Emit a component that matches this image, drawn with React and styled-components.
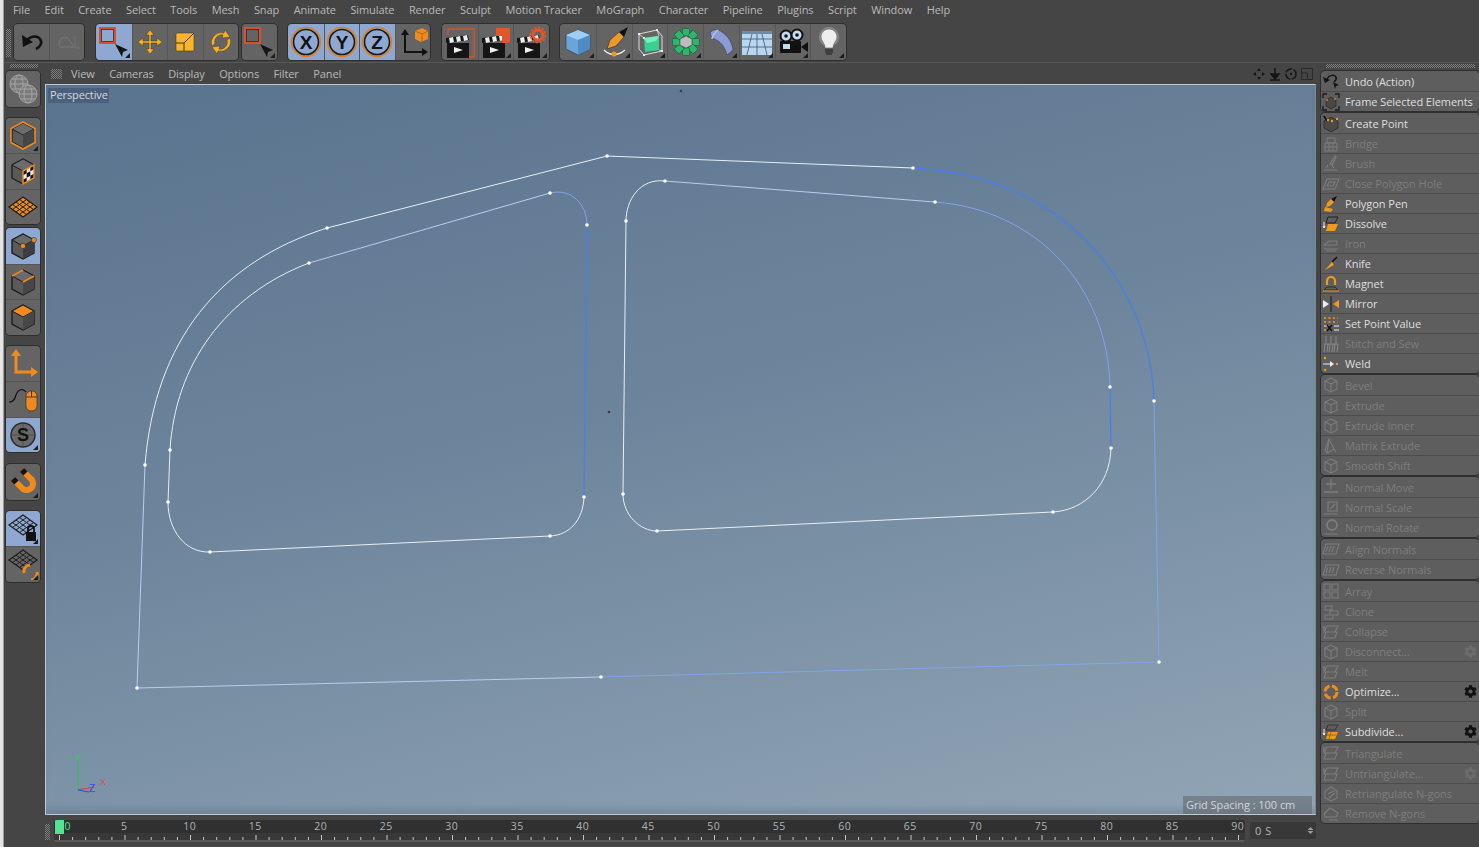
import React from "react";
import styled, { createGlobalStyle } from "styled-components";
import { FaCog } from "react-icons/fa";

const Global = createGlobalStyle`
  html, body { margin: 0; padding: 0; background: #454545; }
  body { font-family: "Open Sans", "Liberation Sans", sans-serif; font-size: 11px; overflow: hidden; }
  * { box-sizing: border-box; }
`;

const Page = styled.div`
  display: flex;
  width: 1479px;
  height: 847px;
  overflow: hidden;
  background: #454545;
`;
const WindowEdge = styled.div`
  width: 4px;
  background: linear-gradient(90deg, #e4e4e4 0 3px, #9a9a9a 3px);
`;
const Shell = styled.div`
  flex: 1;
  display: flex;
  flex-direction: column;
  min-width: 0;
`;
const MenuBar = styled.nav`
  display: flex;
  height: 20px;
  align-items: center;
  padding: 0 0 2px 9px;
  gap: 14.56px;
  color: #b9b9b9;
  letter-spacing: -0.1px;
`;
const Toolbar = styled.div`
  display: flex;
  height: 43px;
  padding: 4px 0 3px 2px;
  border-bottom: 1px solid #575757;
  align-items: stretch;
`;
const Grip = styled.div`
  background: repeating-conic-gradient(#808080 0 25%, #3f3f3f 0 50%) 0 0 / 2px 2px;
  flex: none;
`;
const ToolGrip = styled(Grip)`
  width: 5px;
  height: 28px;
  margin: 5px 3px 0 0;
`;
const ToolGroup = styled.div`
  display: flex;
  height: 36px;
  margin-left: ${(p) => p.$gap}px;
  border-radius: 4px;
  overflow: hidden;
  box-shadow: 0 0 0 1px #2e2e2e;
`;
const ToolButton = styled.div`
  position: relative;
  width: ${(p) => p.$w ?? 35.5}px;
  height: 36px;
  display: flex;
  align-items: center;
  justify-content: center;
  background: ${(p) => (p.$active ? "#8ea8d2" : "#646464")};
  & + & { border-left: 1px solid #565656; }
  &::after {
    content: "";
    display: ${(p) => (p.$corner ? "block" : "none")};
    position: absolute;
    right: 2px;
    bottom: 2px;
    border-left: 5px solid transparent;
    border-bottom: 5px solid #1c1c1c;
  }
`;
const Body = styled.div`
  flex: 1;
  display: flex;
  min-height: 0;
`;
const Palette = styled.aside`
  width: 41px;
  padding: 1px 0 0 2px;
  display: flex;
  flex-direction: column;
  flex: none;
`;
const PaletteGrip = styled(Grip)`
  width: 28px;
  height: 4px;
  margin: 0 0 3px 4px;
`;
const PaletteGroup = styled.div`
  width: 34px;
  flex: none;
  margin-top: ${(p) => p.$top ?? 0}px;
  border-radius: 4px;
  overflow: hidden;
  box-shadow: 0 0 0 1px #2e2e2e;
`;
const PaletteButton = styled(ToolButton)`
  width: 34px;
  height: 35.5px;
  & + & { border-left: 0; border-top: 1px solid #565656; }
`;
const Center = styled.main`
  width: 1271px;
  flex: none;
  display: flex;
  flex-direction: column;
`;
const ViewHeader = styled.div`
  height: 21px;
  display: flex;
  align-items: center;
  padding-left: 6px;
  color: #b9b9b9;
  letter-spacing: -0.1px;
`;
const ViewGrip = styled(Grip)`
  width: 11px;
  height: 10px;
  margin-right: 9px;
`;
const ViewMenu = styled.div`
  display: flex;
  gap: 14.5px;
  flex: 1;
`;
const ViewIcons = styled.div`
  display: flex;
  gap: 2px;
  padding-right: 2px;
`;
const Viewport = styled.section`
  position: relative;
  height: 731px;
  flex: none;
  border: 1px solid #c4c7c9;
  border-right-color: #7a8894;
  background: linear-gradient(166deg, #5a738e 0%, #6d859c 45%, #92a5b5 100%);
  box-shadow: inset 0 -9px 6px -4px rgba(70, 90, 110, 0.28);
  overflow: hidden;
`;
const PerspectiveTag = styled.div`
  position: absolute;
  left: 2px;
  top: 3px;
  width: 61px;
  height: 15px;
  padding-left: 2px;
  line-height: 13px;
  letter-spacing: -0.12px;
  color: #d4d8dc;
  background: rgba(70, 90, 115, 0.75);
`;
const GridTag = styled.div`
  position: absolute;
  right: 3px;
  bottom: 0;
  width: 129px;
  height: 18px;
  padding-left: 3px;
  line-height: 18px;
  letter-spacing: -0.05px;
  color: #d0d5d9;
  background: rgba(95, 100, 105, 0.55);
`;
const SplineLayer = styled.svg`
  position: absolute;
  inset: 0;
  width: 1271px;
  height: 730px;
`;
const Timeline = styled.footer`
  flex: 1;
  display: flex;
  align-items: flex-start;
  padding-top: 5px;
`;
const TimeGrip = styled(Grip)`
  width: 5px;
  height: 16px;
  margin: 4px 4px 0 0;
`;
const Ruler = styled.div`
  position: relative;
  width: 1191px;
  height: 22px;
  border-radius: 3px;
  background: linear-gradient(#303030 0 13px, #383838 13px 20px, #5a5a5a 20px);
  overflow: hidden;
  flex: none;
`;
const RulerMarks = styled.div`
  display: flex;
  height: 14px;
  padding-left: 37.5px;
`;
const RulerMark = styled.span`
  width: 65.5px;
  flex: none;
  text-align: center;
  line-height: 13px;
  font-size: 10.5px;
  letter-spacing: 0.4px;
  color: #aeb4b8;
`;
const Playhead = styled.div`
  position: absolute;
  left: 1px;
  top: 0;
  width: 9px;
  height: 14px;
  background: #55e291;
`;
const PlayheadFrame = styled.span`
  position: absolute;
  left: 10.5px;
  top: 0;
  line-height: 13px;
  font-size: 10.5px;
  color: #55e291;
`;
const Ticks = styled.svg`
  position: absolute;
  left: 0;
  top: 14px;
  width: 1191px;
  height: 8px;
`;
const FrameField = styled.div`
  width: 66px;
  height: 17px;
  margin: 2px 0 0 5px;
  border-radius: 2px;
  background: #383838;
  color: #b5b5b5;
  display: flex;
  align-items: center;
  justify-content: space-between;
  padding: 0 2px 0 5px;
  letter-spacing: 0.6px;
`;
const SideColumn = styled.aside`
  margin-left: 5px;
  width: 159px;
  flex: none;
  display: flex;
  flex-direction: column;
`;
const SideGrip = styled(Grip)`
  height: 4px;
  margin: 1px 5px 3px 5px;
`;
const SideGroup = styled.ul`
  list-style: none;
  margin: 0 1px 2px 0;
  padding: 0;
  background: #5e5e5e;
  border-radius: 4px;
  box-shadow: 0 0 0 1px #2f2f2f;
  overflow: hidden;
`;
const SideRow = styled.li`
  display: flex;
  align-items: center;
  height: 20px;
  padding-left: 1px;
  color: ${(p) => (p.$off ? "#7d7d7d" : "#dedede")};
  letter-spacing: -0.05px;
  & + & { border-top: 1px solid #4c4c4c; }
`;
const RowIcon = styled.span`
  width: 23px;
  height: 18px;
  flex: none;
  display: flex;
  align-items: center;
`;
const RowLabel = styled.span`
  flex: 1;
  white-space: nowrap;
`;
const RowGear = styled.span`
  display: flex;
  padding-right: 2px;
  font-size: 13px;
  color: ${(p) => (p.$off ? "#6b6b6b" : "#111")};
`;
const Glyph = styled.svg`
  width: ${(p) => p.$w ?? 32}px;
  height: ${(p) => p.$h ?? p.$w ?? 32}px;
  flex: none;
`;

const Ico = ({ w = 32, box = 32, children }) => (
  <Glyph $w={w} viewBox={`0 0 ${box} ${box}`}>{children}</Glyph>
);

const Cursor = () => <path d="M17 18l13 6-5 2-1 5z" fill="#151515" />;

const clapper = (
  <>
    <rect x="3" y="17" width="22" height="15" fill="#151515" />
    <path d="M2 12l22-3 1 5-23 3z" fill="#151515" />
    <path d="M5 12l4-1 1 5-4 1zM12 11l4-1 1 5-4 1zM19 10l4-1 1 5-4 1z" fill="#eee" />
    <path d="M10 21l9 3-9 3z" fill="#eee" />
  </>
);

const grid = (stroke, fill) => (
  <>
    <path d="M16 6L30 16 16 26 2 16z" fill={fill} stroke={stroke} strokeWidth="1.2" />
    <path d="M12.5 8.5l14 10M9 11l14 10M5.500 13.500l14 10M19.500 8.500l-14 10M23 11L9 21M26.500 13.500l-14 10" stroke={stroke} strokeWidth="1" fill="none" />
  </>
);

const cube = (top, side, line = "#1c1c1c") => (
  <>
    <path d="M16 4l11 6v13l-11 6-11-6V10z" fill="#5a5a5a" stroke={line} strokeWidth="1.4" />
    <path d="M16 4l11 6-11 6-11-6z" fill={top} stroke={line} strokeWidth="1" />
    <path d="M16 16l11-6v13l-11 6z" fill={side} />
  </>
);

// cloner ring, eight small cubes around the middle one
const ringCubes = [0, 45, 90, 135, 180, 225, 270, 315];

const toolIcons = {
  undo: (
    <Ico>
      <path d="M10 16c3-6 11-7 14-3 3 4 0 8-4 10" fill="none" stroke="#111" strokeWidth="2.6" />
      <path d="M6 9l1 12 10-5z" fill="#111" />
    </Ico>
  ),
  redo: (
    <Ico>
      <path d="M9 21c-3-6 2-11 8-9l6 9H9z" fill="none" stroke="#707070" strokeWidth="1.4" />
      <path d="M24 10v12h5" fill="none" stroke="#707070" strokeWidth="1.2" />
    </Ico>
  ),
  live: (
    <Ico>
      <rect x="2" y="2" width="15" height="15" fill="none" stroke="#d6512c" strokeWidth="2" />
      <rect x="3.500" y="3.500" width="12" height="12" fill="none" stroke="#2c2c2c" strokeWidth="0.8" />
      <Cursor />
    </Ico>
  ),
  move: (
    <Ico>
      <path d="M16 4l4 5h-3v6h6v-3l5 4-5 4v-3h-6v6h3l-4 5-4-5h3v-6H9v3l-5-4 5-4v3h6V9h-3z" fill="#f5b027" stroke="#3a2a10" strokeWidth="0.4" />
    </Ico>
  ),
  scale: (
    <Ico>
      <rect x="7" y="7" width="18" height="18" rx="1.500" fill="#f7b42c" stroke="#3a2a10" strokeWidth="0.5" />
      <path d="M7 17h8l10-10M15 17v8" fill="none" stroke="#4a3510" strokeWidth="1" />
    </Ico>
  ),
  rotate: (
    <Ico>
      <path d="M7 20a10 10 0 0 1 12-13l1-3 5 7-8 1 1-3a7 7 0 0 0-8 9z" fill="#f5b027" stroke="#3a2a10" strokeWidth="0.4" />
      <path d="M25 12a10 10 0 0 1-12 13l-1 3-5-7 8-1-1 3a7 7 0 0 0 8-9z" fill="#f5b027" stroke="#3a2a10" strokeWidth="0.4" />
    </Ico>
  ),
  coords: (
    <Ico>
      <path d="M8 8v18h19" fill="none" stroke="#111" strokeWidth="2" />
      <path d="M8 3l4 6H4zM31 26l-6 4v-8z" fill="#111" />
      <path d="M18 5l7-3 6 3v8l-7 3-6-3z" fill="#ef8a1e" />
      <path d="M18 5l7 3 6-3M25 8v8" stroke="#a95c0c" fill="none" strokeWidth="0.8" />
    </Ico>
  ),
  renderView: (
    <Ico>
      {clapper}
      <path d="M4 9V3h26v28h-5" fill="none" stroke="#d6512c" strokeWidth="1.4" />
    </Ico>
  ),
  renderPic: (
    <Ico>
      {clapper}
      <path d="M16 2h14v13a2 2 0 0 1-2 2h-6v-7h-6z" fill="#e2562a" />
    </Ico>
  ),
  renderSet: (
    <Ico>
      {clapper}
      <circle cx="23" cy="9" r="5" fill="none" stroke="#e2562a" strokeWidth="3" />
      <circle cx="23" cy="9" r="7.500" fill="none" stroke="#e2562a" strokeWidth="1.800" strokeDasharray="2.400 1.500" />
    </Ico>
  ),
  cube: (
    <Ico>
      <path d="M16 4l12 5v14l-12 6-12-6V9z" fill="#6aa5d8" stroke="#223a50" strokeWidth="0.6" />
      <path d="M16 4l12 5-12 5-12-5z" fill="#9ed0f5" />
      <path d="M16 14l12-5v14l-12 6z" fill="#4e8cc4" />
    </Ico>
  ),
  pen: (
    <Ico>
      <path d="M30 1l-9 5 5 5z" fill="#111" />
      <path d="M21 6l5 5-8 9-9 3 3-9z" fill="#e89a2c" stroke="#3a2a10" strokeWidth="0.6" />
      <path d="M6 24c6 6 14 6 21 0" fill="none" stroke="#eee" strokeWidth="1.400" />
      <circle cx="16" cy="28" r="2.500" fill="#ef9a1e" />
    </Ico>
  ),
  gem: (
    <Ico>
      <path d="M5 8l18-4 5 6v15l-18 4-5-6z" fill="none" stroke="#e6e6e6" strokeWidth="0.9" />
      <path d="M10 12l15-2v14l-14 2z" fill="#38d090" />
      <path d="M10 12l15-2-3 5-9 2z" fill="#7af0bc" />
      <path d="M5 8l5 4M23 4l2 6M28 25l-3-1" stroke="#e6e6e6" strokeWidth="0.8" />
      <g fill="#fff">
        <circle cx="5" cy="8" r="1.100" />
        <circle cx="23" cy="4" r="1.100" />
        <circle cx="28" cy="25" r="1.100" />
        <circle cx="10" cy="29" r="1.100" />
        <circle cx="10" cy="12" r="1.100" />
      </g>
    </Ico>
  ),
  cloner: (
    <Ico>
      {ringCubes.map((a) => (
        <g key={a} transform={`rotate(${a} 16 16)`}>
          <rect x="12.500" y="2.500" width="7" height="7.500" rx="1" fill="#2fb56e" stroke="#125a34" strokeWidth="0.6" />
        </g>
      ))}
      <path d="M16 10l6 3v6l-6 3-6-3v-6z" fill="#bdbdbd" stroke="#444" strokeWidth="0.5" />
    </Ico>
  ),
  bend: (
    <Ico>
      <path d="M5 7c2-3 6-4 8-3 8 3 14 11 15 20l-6 5c-2-8-6-14-15-17z" fill="#8c9bd4" stroke="#2c3054" strokeWidth="0.5" />
      <path d="M13 4c-2 2-6 5-6 9" fill="none" stroke="#b6c0ea" strokeWidth="1.5" />
    </Ico>
  ),
  floor: (
    <Ico>
      <rect x="1" y="5" width="30" height="24" fill="#b8d6f2" />
      <rect x="1" y="5" width="30" height="3" fill="#6f8aa5" />
      <path d="M1 13h30M1 21h30M11 8L6 29M21 8l5 21M16 8v21" stroke="#3f5468" strokeWidth="0.8" fill="none" />
    </Ico>
  ),
  camera: (
    <Ico>
      <circle cx="9" cy="10" r="5.500" fill="#c4dcf0" stroke="#111" strokeWidth="2" />
      <circle cx="20" cy="9" r="5.500" fill="#c4dcf0" stroke="#111" strokeWidth="2" />
      <circle cx="9" cy="10" r="1.800" fill="#111" />
      <circle cx="20" cy="9" r="1.800" fill="#111" />
      <rect x="3" y="15" width="21" height="12" rx="1" fill="#111" />
      <path d="M24 21l7-5v10z" fill="#111" />
      <rect x="6" y="18" width="7" height="5" fill="#c4dcf0" />
    </Ico>
  ),
  bulb: (
    <Ico>
      <circle cx="16" cy="11" r="10" fill="rgba(255,255,255,.25)" />
      <path d="M16 3c5 0 8 4 8 8 0 4-4 6-4 11h-8c0-5-4-7-4-11 0-4 3-8 8-8z" fill="#eeeeee" stroke="#555" strokeWidth="0.6" />
      <path d="M12 24h8M12 26h8M13 28h6" stroke="#333" strokeWidth="1.300" />
    </Ico>
  ),
  model: (
    <Ico>
      <g fill="#7a7a7a" stroke="#a4a4a4" strokeWidth="1">
        <circle cx="12" cy="11" r="9" />
        <ellipse cx="12" cy="11" rx="4" ry="9" fill="none" />
        <path d="M3 11h18M5 6h14M5 16h14" />
        <circle cx="21" cy="21" r="9" />
        <ellipse cx="21" cy="21" rx="4" ry="9" fill="none" />
        <path d="M12 21h18M14 16h14M14 26h14" />
      </g>
    </Ico>
  ),
  object: (
    <Ico>
      {cube("#6c6c6c", "#454545", "#222")}
      <path d="M16 3l12 6.500v14L16 30 4 23.500v-14z" fill="none" stroke="#ef8a1e" strokeWidth="1.600" />
    </Ico>
  ),
  texture: (
    <Ico>
      {cube("#6c6c6c", "#eee", "#222")}
      <g transform="matrix(1 -0.545 0 1 16 16)" fill="#111">
        <rect x="0" y="0" width="3.670" height="4.330" />
        <rect x="7.330" y="0" width="3.670" height="4.330" />
        <rect x="3.670" y="4.330" width="3.670" height="4.330" />
        <rect x="0" y="8.660" width="3.670" height="4.340" />
        <rect x="7.330" y="8.660" width="3.670" height="4.340" />
      </g>
      <path d="M16 16l11-6v13l-11 6z" fill="none" stroke="#ef8a1e" strokeWidth="1.500" />
    </Ico>
  ),
  workplane: <Ico>{grid("#1c1c1c", "#e98a22")}</Ico>,
  points: (
    <Ico>
      {cube("#6a6a6a", "#3e3e3e")}
      <circle cx="16" cy="16" r="2.600" fill="#ef8a1e" stroke="#222" strokeWidth="0.5" />
      <circle cx="27" cy="10" r="2.600" fill="#ef8a1e" stroke="#222" strokeWidth="0.5" />
    </Ico>
  ),
  edges: (
    <Ico>
      {cube("#6a6a6a", "#474747")}
      <path d="M5 10L16 4M16 16L27 10" stroke="#ef8a1e" strokeWidth="1.800" fill="none" />
    </Ico>
  ),
  polys: (
    <Ico>
      {cube("#ef8a1e", "#474747")}
    </Ico>
  ),
  axis: (
    <Ico>
      <path d="M9 8v17h17" fill="none" stroke="#ef8a1e" strokeWidth="3" />
      <path d="M9 2l5 7H4zM31 25l-7 5v-10z" fill="#ef8a1e" />
    </Ico>
  ),
  tweak: (
    <Ico>
      <path d="M2 19c4 0 6-3 7-7 2-6 7-7 10-3" fill="none" stroke="#111" strokeWidth="1.200" />
      <rect x="19" y="8" width="11" height="20" rx="5" fill="#ef8a1e" stroke="#222" strokeWidth="0.6" />
      <path d="M19 14h11M24.500 8v6" stroke="#222" strokeWidth="0.8" />
    </Ico>
  ),
  snap: (
    <Ico>
      <circle cx="16" cy="16" r="12" fill="#6a6a6a" stroke="#2b2b2b" strokeWidth="1.500" />
      <path d="M16 4v24M4 16h24" stroke="#4a4a4a" strokeWidth="0.8" />
      <text x="16" y="22" textAnchor="middle" fontFamily="Liberation Sans" fontWeight="700" fontSize="18" fill="#111">S</text>
    </Ico>
  ),
  magnet: (
    <Ico>
      <path d="M6 13l10 10a6.500 6.500 0 0 0 9-9L15 4" fill="none" stroke="#ef8a1e" strokeWidth="6" />
      <path d="M6 13l3.500 3.500M15 4l3.500 3.500" fill="none" stroke="#141414" strokeWidth="6" />
    </Ico>
  ),
  gridLock: (
    <Ico>
      <g transform="translate(0 -3)">{grid("#1c1c1c", "none")}</g>
      <rect x="19" y="20" width="10" height="9" fill="#111" />
      <path d="M21 20v-3a3 3 0 0 1 6 0v3" fill="none" stroke="#111" strokeWidth="1.800" />
    </Ico>
  ),
  gridRot: (
    <Ico>
      <g transform="translate(0 -4)">{grid("#1c1c1c", "none")}</g>
      <path d="M17 25a6.500 6.500 0 0 1 6-8M30 24a6.500 6.500 0 0 1-6 8" fill="none" stroke="#ef8a1e" strokeWidth="3" />
    </Ico>
  ),
};

// stacked tool buttons, in the order they appear
const topGroups = [
  { gap: 0, items: [{ i: "undo", w: 35 }, { i: "redo", w: 35 }] },
  { gap: 12, items: [{ i: "live", on: 1, c: 1 }, { i: "move" }, { i: "scale" }, { i: "rotate" }] },
  { gap: 4, items: [{ i: "live", c: 1, w: 34.500 }] },
  { gap: 11.500, items: [{ l: "X", on: 1 }, { l: "Y", on: 1 }, { l: "Z", on: 1 }, { i: "coords" }] },
  { gap: 12, items: [{ i: "renderView" }, { i: "renderPic", c: 1 }, { i: "renderSet", c: 1 }] },
  {
    gap: 11.500,
    items: [
      { i: "cube", c: 1 }, { i: "pen", c: 1 }, { i: "gem", c: 1 }, { i: "cloner", c: 1 },
      { i: "bend", c: 1 }, { i: "floor", c: 1 }, { i: "camera", c: 1 }, { i: "bulb", c: 1 },
    ].map((b) => ({ ...b, w: 35.750 })),
  },
];

const leftGroups = [
  { top: 0, items: [{ i: "model" }] },
  { top: 11, items: [{ i: "object", c: 1 }, { i: "texture" }, { i: "workplane" }] },
  { top: 4, items: [{ i: "points", on: 1 }, { i: "edges" }, { i: "polys" }] },
  { top: 11, items: [{ i: "axis" }, { i: "tweak" }, { i: "snap", on: 1, c: 1 }] },
  { top: 12, items: [{ i: "magnet", c: 1 }] },
  { top: 11, items: [{ i: "gridLock", on: 1, c: 1 }, { i: "gridRot", c: 1 }] },
];

const AxisLetter = ({ l }) => (
  <Ico>
    <circle cx="16" cy="16" r="14.500" fill="none" stroke="#e0801c" strokeWidth="1.600" />
    <circle cx="16" cy="16" r="12.500" fill="none" stroke="#1a1a1a" strokeWidth="1.600" />
    <text x="16" y="22.500" textAnchor="middle" fontFamily="Liberation Sans" fontWeight="700" fontSize="19" fill="#111">{l}</text>
  </Ico>
);

const off = "#7c7c7c";
const miniCube = (
  <Ico w={18} box={18}>
    <path d="M9 2l6 3v8l-6 3-6-3V5zM3 5l6 3 6-3M9 8v8" fill="none" stroke={off} strokeWidth="1.100" />
  </Ico>
);
const miniPlane = (
  <Ico w={18} box={18}>
    <path d="M5 3h11l-3 6H2zM4 9h11l-2 6H2z" fill="none" stroke={off} strokeWidth="1.100" />
    <path d="M2 3v5" stroke={off} strokeWidth="1.500" />
  </Ico>
);
const miniGrid = (
  <Ico w={18} box={18}>
    <path d="M3 8h12v8H3zM3 12h12M7 8v8M11 8v8M5 3h8v5H5z" fill="none" stroke={off} strokeWidth="1" />
  </Ico>
);

const sideIcons = {
  undo: (
    <Ico w={18} box={18}>
      <path d="M5 7c2-4 7-5 9-2 1 3-1 4-2 5" fill="none" stroke="#141414" strokeWidth="1.500" />
      <path d="M1 5l2 6 5-3z" fill="#141414" />
      <path d="M11 10l6 3-3 1-1 3z" fill="#141414" />
    </Ico>
  ),
  frame: (
    <Ico w={18} box={18}>
      <path d="M1 5V1h4M13 1h4v4M17 13v4h-4M5 17H1v-4" fill="none" stroke="#1b1b1b" strokeWidth="1.300" />
      <path d="M9 4l5 3v6l-5 3-5-3V7z" fill="#484848" stroke="#222" strokeWidth="0.6" />
      <circle cx="5" cy="7" r="1.100" fill="#ef6a1e" />
      <circle cx="13" cy="6" r="1.100" fill="#ef6a1e" />
    </Ico>
  ),
  createPoint: (
    <Ico w={18} box={18}>
      <path d="M9 3l7 4v7l-7 4-7-4V7z" fill="#4a4a4a" stroke="#222" strokeWidth="0.7" />
      <path d="M2 2l3 5" stroke="#111" strokeWidth="1.600" />
      <circle cx="6" cy="6" r="1.200" fill="#ef9a1e" />
      <circle cx="10" cy="7" r="1.200" fill="#ef9a1e" />
      <circle cx="15" cy="5" r="1.200" fill="#ef9a1e" />
    </Ico>
  ),
  bridge: miniGrid,
  brush: (
    <Ico w={18} box={18}>
      <path d="M13 1l-5 8 2 1 4-8zM2 15h13M4 13l2-3M12 13l-2-3" fill="none" stroke={off} strokeWidth="1.200" />
    </Ico>
  ),
  closeHole: (
    <Ico w={18} box={18}>
      <path d="M5 4h12l-4 10H1zM7 7h6l-2 4H5z" fill="none" stroke={off} strokeWidth="1.100" />
    </Ico>
  ),
  polyPen: (
    <Ico w={18} box={18}>
      <path d="M15 1L9 4l3 3z" fill="#111" />
      <path d="M9 4l3 3-4 4-4 1 1-4z" fill="#ef9a1e" />
      <path d="M3 12l8 2-2 3-7-1z" fill="#ef9a1e" />
    </Ico>
  ),
  dissolve: (
    <Ico w={18} box={18}>
      <path d="M6 2h10l-3 6H4z" fill="none" stroke="#222" strokeWidth="1" />
      <path d="M6 9h10l-3 7H4z" fill="#ef9a1e" />
      <path d="M2 7v6m-1-2l1 2 1-2" stroke="#eee" fill="none" strokeWidth="1" />
    </Ico>
  ),
  iron: (
    <Ico w={18} box={18}>
      <path d="M2 10l5-4h8v4zM2 14h14M4 16h10" fill="none" stroke={off} strokeWidth="1.100" />
    </Ico>
  ),
  knife: (
    <Ico w={18} box={18}>
      <path d="M15 2l-5 5" stroke="#111" strokeWidth="1.600" />
      <path d="M10 7l-7 8 9-5z" fill="#ef9a1e" />
    </Ico>
  ),
  magnet: (
    <Ico w={18} box={18}>
      <path d="M5 10V6a4 4 0 0 1 8 0v4" fill="none" stroke="#ef9a1e" strokeWidth="2.200" />
      <path d="M2 15l3-3h8l3 3z" fill="none" stroke="#222" strokeWidth="0.8" />
      <path d="M1 16h16" stroke="#ef9a1e" strokeWidth="1" />
    </Ico>
  ),
  mirror: (
    <Ico w={18} box={18}>
      <path d="M1 5l6 4-6 4z" fill="#eee" />
      <path d="M17 5l-6 4 6 4z" fill="#ef9a1e" />
      <path d="M9 1v16" stroke="#1a1a1a" strokeWidth="1" />
    </Ico>
  ),
  setPoint: (
    <Ico w={18} box={18}>
      <path d="M2 3h14M2 7h14" stroke="#ef9a1e" strokeWidth="1.500" strokeDasharray="2 2.500" />
      <path d="M2 11h5M12 11h5M12 15h5" stroke="#eee" strokeWidth="1.200" />
      <path d="M5 10l5 6M10 10l-5 6" stroke="#111" strokeWidth="1.500" />
      <path d="M2 15h2" stroke="#ef9a1e" strokeWidth="1.500" />
    </Ico>
  ),
  stitch: (
    <Ico w={18} box={18}>
      <path d="M4 1v7M9 1v7M14 1v7M2 9h14M3 9l-1 8M8 9l-1 8M13 9l-1 8M6 9l-1 8M11 9l-1 8M16 9l-1 8" fill="none" stroke="#8a8a8a" strokeWidth="1" />
    </Ico>
  ),
  weld: (
    <Ico w={18} box={18}>
      <circle cx="3" cy="3" r="1.200" fill="#ef9a1e" />
      <circle cx="3" cy="15" r="1.200" fill="#ef9a1e" />
      <circle cx="15" cy="9" r="1.200" fill="#ef9a1e" />
      <path d="M1 9h8" stroke="#eee" strokeWidth="1.200" />
      <path d="M8 6l4 3-4 3z" fill="#eee" />
    </Ico>
  ),
  cube: miniCube,
  matrix: (
    <Ico w={18} box={18}>
      <path d="M7 2l5 10-7 4-2-3zM7 2L5 16M12 12l2 3" fill="none" stroke={off} strokeWidth="1.100" />
    </Ico>
  ),
  nMove: (
    <Ico w={18} box={18}>
      <path d="M9 1v10M4 6h10M2 14h14" fill="none" stroke={off} strokeWidth="1.300" />
    </Ico>
  ),
  nScale: (
    <Ico w={18} box={18}>
      <path d="M6 3h9v9H6zM2 15h14" fill="none" stroke={off} strokeWidth="1.200" />
      <path d="M8 10l5-5" stroke={off} strokeWidth="1.200" />
    </Ico>
  ),
  nRotate: (
    <Ico w={18} box={18}>
      <circle cx="10" cy="6" r="5" fill="none" stroke={off} strokeWidth="1.800" />
      <path d="M2 15h14" stroke={off} strokeWidth="1.200" />
    </Ico>
  ),
  normals: (
    <Ico w={18} box={18}>
      <path d="M4 4h13l-3 10H1zM6 6l-2 6M9 6l-2 6M12 6l-2 6" fill="none" stroke={off} strokeWidth="1.100" />
    </Ico>
  ),
  array: (
    <Ico w={18} box={18}>
      <path d="M2 2h6v6H2zM10 2h6v6h-6zM2 10h6v6H2zM10 10h6v6h-6z" fill="none" stroke={off} strokeWidth="1.100" />
    </Ico>
  ),
  clone: (
    <Ico w={18} box={18}>
      <path d="M3 3h7v4H3zM8 8h8v4H8zM3 12h8v4H3z" fill="none" stroke={off} strokeWidth="1.100" />
    </Ico>
  ),
  collapse: miniPlane,
  optimize: (
    <Ico w={18} box={18}>
      <circle cx="9" cy="9" r="6" fill="none" stroke="#ef8a1e" strokeWidth="3" strokeDasharray="7 2.500" />
    </Ico>
  ),
  subdivide: (
    <Ico w={18} box={18}>
      <path d="M6 2h10l-3 5H4z" fill="none" stroke="#333" strokeWidth="1" />
      <path d="M6 9h10l-3 7H4z" fill="#ef9a1e" />
      <path d="M9 9l-2 7M14 12H5" stroke="#8a5410" strokeWidth="0.7" />
      <path d="M2 6v6m-1-2l1 2 1-2" stroke="#eee" fill="none" strokeWidth="1" />
    </Ico>
  ),
  retri: (
    <Ico w={18} box={18}>
      <path d="M9 2l6 4v7l-6 3-6-3V6zM6 9l6-3M7 13l6-5" fill="none" stroke={off} strokeWidth="1.100" />
    </Ico>
  ),
  removeNgon: (
    <Ico w={18} box={18}>
      <path d="M2 9l6-6 8 5-2 4H3zM7 15h9" fill="none" stroke={off} strokeWidth="1.200" />
    </Ico>
  ),
};

const sideGroups = [
  [
    { t: "Undo (Action)", i: "undo" },
    { t: "Frame Selected Elements", i: "frame" },
  ],
  [
    { t: "Create Point", i: "createPoint" },
    { t: "Bridge", i: "bridge", off: 1 },
    { t: "Brush", i: "brush", off: 1 },
    { t: "Close Polygon Hole", i: "closeHole", off: 1 },
    { t: "Polygon Pen", i: "polyPen" },
    { t: "Dissolve", i: "dissolve" },
    { t: "Iron", i: "iron", off: 1 },
    { t: "Knife", i: "knife" },
    { t: "Magnet", i: "magnet" },
    { t: "Mirror", i: "mirror" },
    { t: "Set Point Value", i: "setPoint" },
    { t: "Stitch and Sew", i: "stitch", off: 1 },
    { t: "Weld", i: "weld" },
  ],
  [
    { t: "Bevel", i: "cube", off: 1 },
    { t: "Extrude", i: "cube", off: 1 },
    { t: "Extrude Inner", i: "cube", off: 1 },
    { t: "Matrix Extrude", i: "matrix", off: 1 },
    { t: "Smooth Shift", i: "cube", off: 1 },
  ],
  [
    { t: "Normal Move", i: "nMove", off: 1 },
    { t: "Normal Scale", i: "nScale", off: 1 },
    { t: "Normal Rotate", i: "nRotate", off: 1 },
  ],
  [
    { t: "Align Normals", i: "normals", off: 1 },
    { t: "Reverse Normals", i: "normals", off: 1 },
  ],
  [
    { t: "Array", i: "array", off: 1 },
    { t: "Clone", i: "clone", off: 1 },
    { t: "Collapse", i: "collapse", off: 1 },
    { t: "Disconnect...", i: "cube", off: 1, gear: 1 },
    { t: "Melt", i: "collapse", off: 1 },
    { t: "Optimize...", i: "optimize", gear: 1 },
    { t: "Split", i: "cube", off: 1 },
    { t: "Subdivide...", i: "subdivide", gear: 1 },
  ],
  [
    { t: "Triangulate", i: "collapse", off: 1 },
    { t: "Untriangulate...", i: "collapse", off: 1, gear: 1 },
    { t: "Retriangulate N-gons", i: "retri", off: 1 },
    { t: "Remove N-gons", i: "removeNgon", off: 1 },
  ],
];

const menus = ["File", "Edit", "Create", "Select", "Tools", "Mesh", "Snap", "Animate", "Simulate", "Render", "Sculpt", "Motion Tracker", "MoGraph", "Character", "Pipeline", "Plugins", "Script", "Window", "Help"];
const viewMenus = ["View", "Cameras", "Display", "Options", "Filter", "Panel"];

// spline drawn in page coordinates
const WHITE = "#e8eef4";
const PALE = "#b9cdf0";
const MID = "#7fa4ea";
const BLUE = "#4a80e4";
const segments = [
  ["M137 688L145 465", PALE],
  ["M145 465C155 340 220 262 327 228", WHITE],
  ["M327 228L607 156", WHITE],
  ["M607 156L913 168", WHITE],
  ["M913 168C1060 175 1150 280 1154 401", BLUE],
  ["M1154 401L1159 662", MID],
  ["M1159 662L601 677", MID],
  ["M601 677L137 688", PALE],
  ["M170 450C175 365 225 295 309 263", WHITE],
  ["M309 263L550 193", PALE],
  ["M550 193C572 188 587 205 587 225", MID],
  ["M587 225L584 497", BLUE],
  ["M584 497C583 520 570 535 550 536", WHITE],
  ["M550 536L210 552", WHITE],
  ["M210 552C185 553 168 530 168 502", WHITE],
  ["M168 502L170 450", WHITE],
  ["M665 181L935 202", PALE],
  ["M935 202C1040 210 1108 290 1110 387", MID],
  ["M1110 387L1111 448", BLUE],
  ["M1111 448C1110 485 1085 510 1053 512", WHITE],
  ["M1053 512L657 531", WHITE],
  ["M657 531C640 531 623 515 623 494", WHITE],
  ["M623 494L626 221", WHITE],
  ["M626 221C626 200 640 178 665 181", WHITE],
];
const knots = [
  [137, 688], [145, 465], [327, 228], [607, 156], [913, 168], [1154, 401], [1159, 662], [601, 677],
  [309, 263], [550, 193], [587, 225], [584, 497], [550, 536], [210, 552], [168, 502], [170, 450],
  [665, 181], [935, 202], [1110, 387], [1111, 448], [1053, 512], [657, 531], [623, 494], [626, 221],
];

const marks = Array.from({ length: 18 }, (_, i) => (i + 1) * 5);
const frames = Array.from({ length: 91 }, (_, i) => i);

const renderTool = (b, k, Btn) => (
  <Btn key={k} $active={!!b.on} $corner={!!b.c} $w={b.w}>
    {b.l ? <AxisLetter l={b.l} /> : toolIcons[b.i]}
  </Btn>
);

export default function App() {
  return (
    <Page>
      <Global />
      <WindowEdge />
      <Shell>
        <MenuBar>
          {menus.map((m) => <span key={m}>{m}</span>)}
        </MenuBar>
        <Toolbar>
          <ToolGrip />
          {topGroups.map((g, i) => (
            <ToolGroup key={i} $gap={g.gap}>
              {g.items.map((b, k) => renderTool(b, k, ToolButton))}
            </ToolGroup>
          ))}
        </Toolbar>
        <Body>
          <Palette>
            <PaletteGrip />
            {leftGroups.map((g, i) => (
              <PaletteGroup key={i} $top={g.top}>
                {g.items.map((b, k) => renderTool(b, k, PaletteButton))}
              </PaletteGroup>
            ))}
          </Palette>
          <Center>
            <ViewHeader>
              <ViewGrip />
              <ViewMenu>
                {viewMenus.map((m) => <span key={m}>{m}</span>)}
              </ViewMenu>
              <ViewIcons>
                <Ico w={14} box={14}>
                  <path d="M7 1l2 3H5zM7 13l2-3H5zM1 7l3-2v4zM13 7l-3-2v4z" fill="#161616" />
                </Ico>
                <Ico w={14} box={14}>
                  <path d="M7 1v8M3 7l4 5 4-5zM2 13h10" fill="#161616" stroke="#161616" strokeWidth="1.500" />
                </Ico>
                <Ico w={14} box={14}>
                  <circle cx="7" cy="7" r="5" fill="none" stroke="#161616" strokeWidth="1.500" strokeDasharray="7 1.500" />
                  <circle cx="7" cy="7" r="1.200" fill="#161616" />
                </Ico>
                <Ico w={14} box={14}>
                  <path d="M1.500 1.500h11v11h-11zM1.500 6h6v6.500" fill="none" stroke="#2a2a2a" strokeWidth="1" />
                </Ico>
              </ViewIcons>
            </ViewHeader>
            <Viewport>
              <PerspectiveTag>Perspective</PerspectiveTag>
              <SplineLayer viewBox="46 85 1271 730">
                {segments.map(([d, c], i) => (
                  <path key={i} d={d} fill="none" stroke={c} strokeWidth={c === BLUE ? 1.300 : 1} />
                ))}
                {knots.map(([x, y], i) => (
                  <circle key={i} cx={x} cy={y} r="1.800" fill="#fff" />
                ))}
                <circle cx="609" cy="412" r="1.300" fill="#4a3a3a" />
                <circle cx="681" cy="91" r="1.300" fill="#4a3a3a" />
                <path d="M78 790V755" stroke="#2ac34e" strokeWidth="1" />
                <path d="M78 790l16-3" stroke="#e8383c" strokeWidth="1" />
                <path d="M78 790l11 2" stroke="#2d4cf0" strokeWidth="1" />
                <text x="75" y="761" fontSize="9" fill="#39c860" fontFamily="Liberation Sans">Y</text>
                <text x="100" y="785" fontSize="9" fill="#e84a4c" fontFamily="Liberation Sans">X</text>
                <text x="89" y="792" fontSize="10" fill="#2d4cf0" fontFamily="Liberation Sans">Z</text>
              </SplineLayer>
              <GridTag>Grid Spacing : 100 cm</GridTag>
            </Viewport>
            <Timeline>
              <TimeGrip />
              <Ruler>
                <RulerMarks>
                  {marks.map((m) => <RulerMark key={m}>{m}</RulerMark>)}
                </RulerMarks>
                <Playhead />
                <PlayheadFrame>0</PlayheadFrame>
                <Ticks viewBox="0 0 1191 8">
                  {frames.map((f) => (
                    <path key={f} d={`M${5.5 + f * 13.1} ${f % 5 === 0 ? 1 : 3}V6`} stroke="#c8c8c8" strokeWidth="1" />
                  ))}
                </Ticks>
              </Ruler>
              <FrameField>
                <span>0 S</span>
                <Ico w={7} box={7}>
                  <path d="M3.500 0l3 3h-6zM3.500 7l3-3h-6z" fill="#9a9a9a" />
                </Ico>
              </FrameField>
            </Timeline>
          </Center>
          <SideColumn>
            <SideGrip />
            {sideGroups.map((g, i) => (
              <SideGroup key={i}>
                {g.map((r) => (
                  <SideRow key={r.t} $off={!!r.off}>
                    <RowIcon>{sideIcons[r.i]}</RowIcon>
                    <RowLabel>{r.t}</RowLabel>
                    {r.gear && (
                      <RowGear $off={!!r.off}><FaCog /></RowGear>
                    )}
                  </SideRow>
                ))}
              </SideGroup>
            ))}
          </SideColumn>
        </Body>
      </Shell>
    </Page>
  );
}
